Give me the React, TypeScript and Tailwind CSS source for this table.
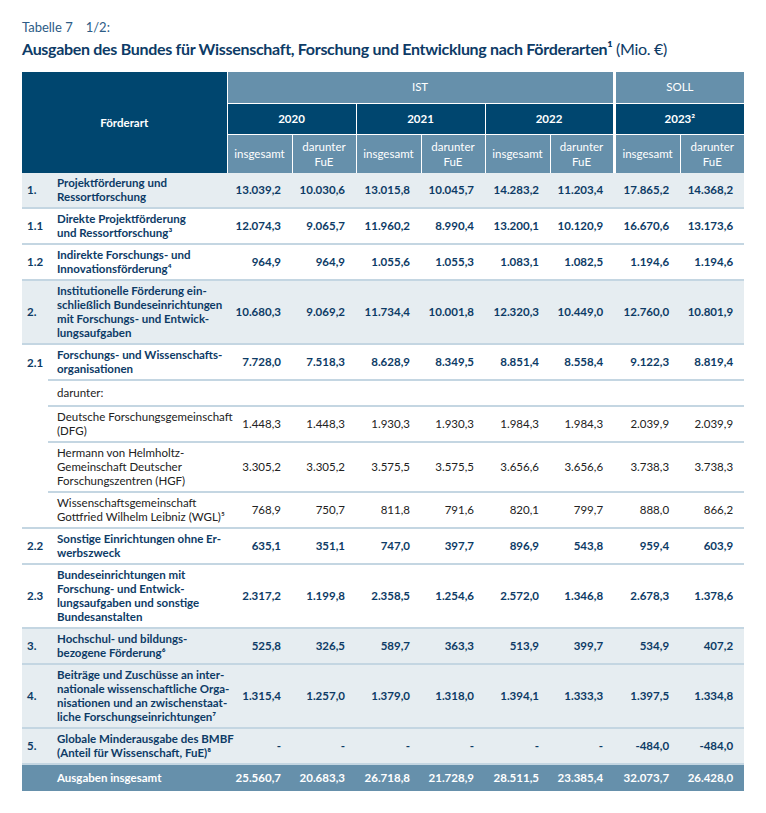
import React from "react";

type Row = {
  no: string;
  label: string[];
  values: string[];
  kind: "main" | "sub" | "plain" | "note";
  nested?: boolean;
};

const rows: Row[] = [
  { no: "1.", label: ["Projektförderung und", "Ressortforschung"], values: ["13.039,2", "10.030,6", "13.015,8", "10.045,7", "14.283,2", "11.203,4", "17.865,2", "14.368,2"], kind: "main" },
  { no: "1.1", label: ["Direkte Projektförderung", "und Ressortforschung³"], values: ["12.074,3", "9.065,7", "11.960,2", "8.990,4", "13.200,1", "10.120,9", "16.670,6", "13.173,6"], kind: "sub" },
  { no: "1.2", label: ["Indirekte Forschungs- und", "Innovationsförderung⁴"], values: ["964,9", "964,9", "1.055,6", "1.055,3", "1.083,1", "1.082,5", "1.194,6", "1.194,6"], kind: "sub" },
  { no: "2.", label: ["Institutionelle Förderung ein-", "schließlich Bundeseinrichtungen", "mit Forschungs- und Entwick-", "lungsaufgaben"], values: ["10.680,3", "9.069,2", "11.734,4", "10.001,8", "12.320,3", "10.449,0", "12.760,0", "10.801,9"], kind: "main" },
  { no: "2.1", label: ["Forschungs- und Wissenschafts-", "organisationen"], values: ["7.728,0", "7.518,3", "8.628,9", "8.349,5", "8.851,4", "8.558,4", "9.122,3", "8.819,4"], kind: "sub", nested: true },
  { no: "", label: ["darunter:"], values: [], kind: "note", nested: true },
  { no: "", label: ["Deutsche Forschungsgemeinschaft", "(DFG)"], values: ["1.448,3", "1.448,3", "1.930,3", "1.930,3", "1.984,3", "1.984,3", "2.039,9", "2.039,9"], kind: "plain", nested: true },
  { no: "", label: ["Hermann von Helmholtz-", "Gemeinschaft Deutscher", "Forschungszentren (HGF)"], values: ["3.305,2", "3.305,2", "3.575,5", "3.575,5", "3.656,6", "3.656,6", "3.738,3", "3.738,3"], kind: "plain", nested: true },
  { no: "", label: ["Wissenschaftsgemeinschaft", "Gottfried Wilhelm Leibniz (WGL)⁵"], values: ["768,9", "750,7", "811,8", "791,6", "820,1", "799,7", "888,0", "866,2"], kind: "plain" },
  { no: "2.2", label: ["Sonstige Einrichtungen ohne Er-", "werbszweck"], values: ["635,1", "351,1", "747,0", "397,7", "896,9", "543,8", "959,4", "603,9"], kind: "sub" },
  { no: "2.3", label: ["Bundeseinrichtungen mit", "Forschung- und Entwick-", "lungsaufgaben und sonstige", "Bundesanstalten"], values: ["2.317,2", "1.199,8", "2.358,5", "1.254,6", "2.572,0", "1.346,8", "2.678,3", "1.378,6"], kind: "sub" },
  { no: "3.", label: ["Hochschul- und bildungs-", "bezogene Förderung⁶"], values: ["525,8", "326,5", "589,7", "363,3", "513,9", "399,7", "534,9", "407,2"], kind: "main" },
  { no: "4.", label: ["Beiträge und Zuschüsse an inter-", "nationale wissenschaftliche Orga-", "nisationen und an zwischenstaat-", "liche Forschungseinrichtungen⁷"], values: ["1.315,4", "1.257,0", "1.379,0", "1.318,0", "1.394,1", "1.333,3", "1.397,5", "1.334,8"], kind: "main" },
  { no: "5.", label: ["Globale Minderausgabe des BMBF", "(Anteil für Wissenschaft, FuE)⁸"], values: ["-", "-", "-", "-", "-", "-", "-484,0", "-484,0"], kind: "main" },
];

const total = ["25.560,7", "20.683,3", "26.718,8", "21.728,9", "28.511,5", "23.385,4", "32.073,7", "26.428,0"];

export default function App() {
  return (
    <div className="min-h-screen bg-white pl-[22px] pt-[18px] text-[#0d3b66]" style={{ fontFamily: "Lato, 'Noto Sans', sans-serif" }}>
      <div className="flex gap-[13px] text-[13px] leading-[18px] text-[#2d5c86]">
        <span>Tabelle 7</span>
        <span>1/2:</span>
      </div>
      <h1 className="mt-[1px] text-[16px] font-bold leading-[24px] tracking-[-0.3px] text-[#0d3b66]">
        Ausgaben des Bundes für Wissenschaft, Forschung und Entwicklung nach Förderarten¹{" "}
        <span className="font-normal">(Mio. €)</span>
      </h1>

      <table className="mt-[11px] w-[722px] table-fixed border-collapse text-[11.5px] leading-[14px]">
        <colgroup>
          <col className="w-[26px]" />
          <col className="w-[179px]" />
          <col className="w-[65px]" />
          <col className="w-[64px]" />
          <col className="w-[65px]" />
          <col className="w-[64px]" />
          <col className="w-[65px]" />
          <col className="w-[64px]" />
          <col className="w-[66px]" />
          <col className="w-[64px]" />
        </colgroup>
        <thead className="text-white">
          <tr className="h-[31px]">
            <th colSpan={2} rowSpan={3} className="border-r border-white bg-[#00466f] font-bold">
              Förderart
            </th>
            <th colSpan={6} className="border-b border-white bg-[#6690ab] font-normal">IST</th>
            <th colSpan={2} className="border-b border-l-[3px] border-white bg-[#6690ab] font-normal">SOLL</th>
          </tr>
          <tr className="h-[31px]">
            <th colSpan={2} className="border-b border-r border-white bg-[#00466f] font-bold">2020</th>
            <th colSpan={2} className="border-b border-r border-white bg-[#00466f] font-bold">2021</th>
            <th colSpan={2} className="border-b border-white bg-[#00466f] font-bold">2022</th>
            <th colSpan={2} className="border-b border-l-[3px] border-white bg-[#00466f] font-bold">2023²</th>
          </tr>
          <tr className="h-[39px]">
            {[0, 1, 2, 3].map((i) => (
              <React.Fragment key={i}>
                <th className={`border-r border-white bg-[#6690ab] font-normal ${i === 3 ? "border-l-[3px]" : ""}`}>insgesamt</th>
                <th className={`bg-[#6690ab] font-normal leading-[15px] ${i < 2 ? "border-r border-white" : ""}`}>
                  darunter
                  <br />
                  FuE
                </th>
              </React.Fragment>
            ))}
          </tr>
        </thead>
        <tbody>
          {rows.map((r, idx) => {
            const bg = r.kind === "main" ? "bg-[#e6edf1]" : "bg-white";
            const bold = r.kind === "main" || r.kind === "sub";
            const color = bold ? "text-[#0d3b66] font-bold" : "text-[#222222]";
            const line = "border-b-2 border-[#c4d6e2]";
            return (
              <tr key={idx} className={`${bg} ${color} ${r.kind === "note" ? "h-[26px]" : ""}`}>
                <td className={`pl-[5px] align-middle ${r.nested ? "" : line}`}>{r.no}</td>
                <td className={`py-[3px] pl-[9px] align-middle ${line}`}>
                  {r.label.map((l, i) => (
                    <div key={i} className="whitespace-nowrap">{l}</div>
                  ))}
                </td>
                {r.kind === "note"
                  ? Array.from({ length: 8 }).map((_, i) => <td key={i} className={line} />)
                  : r.values.map((v, i) => (
                      <td key={i} className={`pr-[11px] text-right align-middle ${line}`}>
                        {v}
                      </td>
                    ))}
              </tr>
            );
          })}
          <tr className="h-[27px] bg-[#6690ab] font-bold text-white">
            <td />
            <td className="pl-[9px]">Ausgaben insgesamt</td>
            {total.map((v, i) => (
              <td key={i} className="pr-[11px] text-right">
                {v}
              </td>
            ))}
          </tr>
        </tbody>
      </table>
    </div>
  );
}
